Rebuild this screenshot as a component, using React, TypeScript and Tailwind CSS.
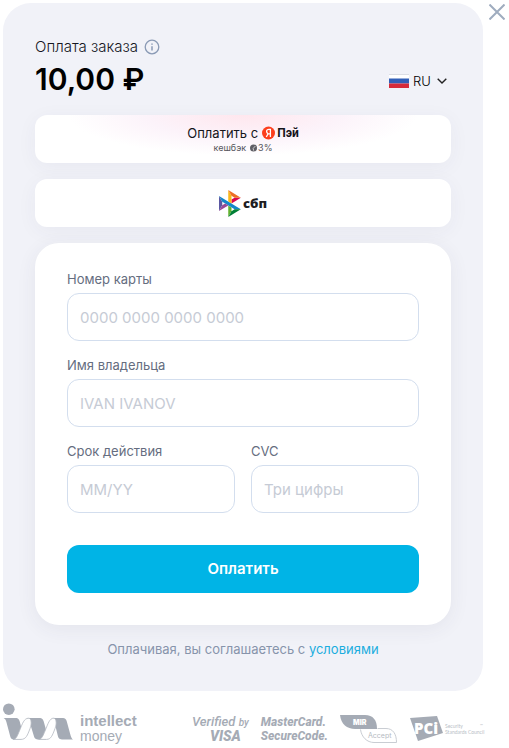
import { useState } from "react";
import type { InputHTMLAttributes } from "react";

function Field({
  id,
  label,
  ...rest
}: { id: string; label: string } & InputHTMLAttributes<HTMLInputElement>) {
  return (
    <div className="min-w-0 flex-1">
      <label htmlFor={id} className="block text-[13px] leading-6 text-[#656d80]">
        {label}
      </label>
      <input
        id={id}
        type="text"
        className="mt-0.5 h-12 w-full rounded-xl border border-[#d3deee] bg-white px-3 text-[15px] text-[#1f2433] outline-none placeholder:text-[#c6cbd5] focus:border-[#00b4e6]"
        {...rest}
      />
    </div>
  );
}

function InfoIcon() {
  return (
    <svg width="16" height="16" viewBox="0 0 16 16" fill="none" stroke="#8a9ab5">
      <circle cx="8" cy="8" r="6.8" strokeWidth="1.3" />
      <path d="M8 7.2V11.4M8 4.4V5.8" strokeWidth="1.5" />
    </svg>
  );
}

function Flag() {
  return (
    <svg width="20" height="14" viewBox="0 0 20 14">
      <path fill="#dcdee5" d="M0 0H20V5H0Z" />
      <path fill="#fff" d="M0 1H20V5H0Z" />
      <path fill="#315fb8" d="M0 4.5H20V9.5H0Z" />
      <path fill="#d52b3b" d="M0 9.5H20V14H0Z" />
    </svg>
  );
}

function YandexMark() {
  return (
    <svg width="13" height="14" viewBox="0 0 13 14">
      <circle cx="6.5" cy="7" r="6.5" fill="#fc3f1d" />
      <path
        d="M8.4 11V3.4H7C5.4 3.4 4.6 4.3 4.6 5.5C4.6 6.7 5.3 7.2 6.1 7.8L4.3 11M6.1 7.8H8.4"
        fill="none"
        stroke="#fff"
        strokeWidth="1.3"
      />
    </svg>
  );
}

function CashbackMark() {
  return (
    <svg width="7" height="8" viewBox="0 0 7 8">
      <circle cx="3.5" cy="4" r="3.5" fill="#5f5f66" />
      <path d="M3.2 4.4L5.4 2M3.2 4.4L3.6 6.6" stroke="#fff" strokeWidth="0.7" />
    </svg>
  );
}

function SbpMark() {
  return (
    <svg width="22" height="27" viewBox="0 0 98 120">
      <path fill="#5b57a2" d="M0 26.1L14.5 52.1V67.9L0 93.9Z" />
      <path fill="#d90751" d="M55.8 42.6L69.4 34.3H97.3L55.8 59.7Z" />
      <path fill="#fab718" d="M55.7 26L55.8 60.4L41.2 51.4V0Z" />
      <path fill="#ed6f26" d="M97.3 34.3H69.4L55.7 26L41.2 0Z" />
      <path fill="#63b22f" d="M55.8 94V77.3L41.2 68.5V120Z" />
      <path fill="#1487c9" d="M69.4 85.7L14.5 52.1L0 26.1L97.2 85.7Z" />
      <path fill="#017f36" d="M41.2 120L55.8 94L69.4 85.7H97.2Z" />
      <path fill="#984995" d="M0 93.9L41.4 68.5L27.5 60L14.5 67.9Z" />
    </svg>
  );
}

function ImMark() {
  return (
    <svg width="70" height="38" viewBox="0 0 70 38">
      <circle cx="5.8" cy="6.2" r="5.8" fill="#a5abb5" />
      <g fill="#a5abb5">
        <path d="M0.6 15H12.5C15.5 15 16.4 17 17 19.5L20.6 34L18 36.4H11C8.4 36.4 7.6 35 7 32.5L3.4 19C2.9 17 2.2 15.8 0.6 15Z" />
        <path d="M24 15H36C39.6 15 40.4 17 41 19.5L45 34L43 36.4H34.5C32 36.4 31.4 34.8 30.8 32.8L26 17Z" />
        <path d="M50 15H59C62.4 15 63.2 16.4 63.8 18.6L67.2 31C68 34 68.6 35.6 70 36.4H59C56 36.4 55.4 34.8 54.8 32.8L51 17Z" />
      </g>
      <g fill="#fff" stroke="#b4b9c1" strokeWidth="0.8">
        <path d="M10 36.4C13.5 36.4 14.6 32 16.4 28C19.4 20.6 21 15.2 25.6 15.2C27 15.2 27.6 16.4 27.9 17.6C28.3 19.6 28.4 22 27 25.6C24.4 32.4 23 36.4 18 36.4Z" />
        <path d="M35.6 36.4C39 36.4 40.2 32 42 28C45 20.6 46.6 15.2 50.6 15.2C52 15.2 52.6 16.4 52.9 17.6C53.3 19.6 53.4 22 52 25.6C49.4 32.4 48 36.4 43.6 36.4Z" />
      </g>
    </svg>
  );
}

function MirAccept() {
  return (
    <svg width="58" height="28" viewBox="0 0 58 28" fontFamily="Inter, sans-serif">
      <path d="M0 0H25C33 0 37 5 37 14H15C7 14 1 9 0 0Z" fill="#a5abb5" />
      <path
        d="M37.5 13.5H46C53 13.5 56.5 19 56.5 27.5H34C27 27.5 21.5 22 20.5 14.5"
        fill="none"
        stroke="#c9cdd3"
      />
      <text x="13" y="10" fontSize="7" fontWeight="900" fill="#fff">
        MIR
      </text>
      <text x="28" y="23" fontSize="7" fill="#b5bac2">
        Accept
      </text>
    </svg>
  );
}

function PciMark() {
  return (
    <svg width="75" height="26" viewBox="0 0 75 26" fontFamily="Open Sans, sans-serif">
      <path d="M0 3L27 1L33 18L8 26Z" fill="#a5abb5" />
      <text x="4" y="19" fontSize="15" fontWeight="800" fill="#fff">
        PCi
      </text>
      <g fontFamily="Lato, sans-serif" fontSize="5" fill="#b9bec6">
        <text x="35" y="13">Security</text>
        <text x="35" y="19">Standards Council</text>
        <text x="70" y="12" fontSize="4">™</text>
      </g>
    </svg>
  );
}

export default function App() {
  const [lang, setLang] = useState("RU");

  return (
    <div className="bg-white p-[3px] font-[Inter,sans-serif]">
      <div className="flex items-start gap-1.5">
        <main className="min-w-0 flex-1 rounded-[28px] bg-[#f1f2f8] px-8 pt-8 pb-[30px]">
          <header className="flex items-end justify-between">
            <div>
              <div className="flex items-center gap-1.5 text-[15px] leading-6 font-light text-[#15171f]">
                Оплата заказа
                <button type="button" aria-label="Информация о заказе">
                  <InfoIcon />
                </button>
              </div>
              <p className="text-[30px] leading-10 font-semibold text-black">10,00 ₽</p>
            </div>
            <label className="mb-2 flex items-center gap-1">
              <Flag />
              <span className="grid items-center">
                <select
                  aria-label="Язык"
                  value={lang}
                  onChange={(e) => setLang(e.target.value)}
                  className="col-start-1 row-start-1 w-[38px] appearance-none bg-transparent text-[13px] leading-5 font-light text-black outline-none"
                >
                  <option>RU</option>
                  <option>EN</option>
                </select>
                <svg
                  className="pointer-events-none col-start-1 row-start-1 mr-1 justify-self-end"
                  width="10"
                  height="6"
                  viewBox="0 0 10 6"
                  fill="none"
                >
                  <path d="M0.7 0.7L5 5L9.3 0.7" stroke="#222" strokeWidth="1.4" />
                </svg>
              </span>
            </label>
          </header>

          {/* Quick payment */}
          <div className="mt-4 space-y-4">
            <button
              type="button"
              className="flex h-12 w-full flex-col items-center justify-center rounded-xl bg-white bg-[radial-gradient(ellipse_42%_85%_at_50%_0%,#ffe7ee,#fcf3fa_55%,#ffffff)] pb-0.5 shadow-[0_4px_20px_rgba(60,60,90,0.05)]"
            >
              <span className="flex items-center gap-1 text-[13px] leading-5 text-[#15151a]">
                Оплатить с
                <span className="flex items-center gap-0.5">
                  <YandexMark />
                  <span className="font-[Roboto,sans-serif] text-xs font-bold">Пэй</span>
                </span>
              </span>
              <span className="flex items-center gap-1 text-[9px] leading-[10px] text-[#55555c]">
                кешбэк
                <span className="flex items-center gap-px">
                  <CashbackMark />
                  3%
                </span>
              </span>
            </button>
            <button
              type="button"
              className="flex h-12 w-full items-center justify-center gap-0.5 rounded-xl bg-white shadow-[0_4px_20px_rgba(60,60,90,0.05)]"
            >
              <SbpMark />
              <span className="font-[Open_Sans,sans-serif] text-[13px] leading-5 font-extrabold text-[#1d1d1f]">
                сбп
              </span>
            </button>
          </div>

          {/* Card form */}
          <form
            onSubmit={(e) => e.preventDefault()}
            className="mt-4 space-y-3 rounded-3xl bg-white px-8 pt-6 pb-8 shadow-[0_4px_20px_rgba(60,60,90,0.07)]"
          >
            <Field id="number" label="Номер карты" placeholder="0000 0000 0000 0000" inputMode="numeric" />
            <Field id="holder" label="Имя владельца" placeholder="IVAN IVANOV" />
            <div className="flex gap-4">
              <Field id="expiry" label="Срок действия" placeholder="MM/YY" />
              <Field id="cvc" label="CVC" placeholder="Три цифры" inputMode="numeric" />
            </div>
            <button
              type="submit"
              className="mt-5 h-12 w-full rounded-xl bg-[#00b4e6] text-[15px] font-semibold text-white"
            >
              Оплатить
            </button>
          </form>

          <p className="mt-3 text-center text-[13px] leading-6 text-[#8794ab]">
            Оплачивая, вы соглашаетесь с{" "}
            <a href="#terms" className="text-[#1badde]">
              условиями
            </a>
          </p>
        </main>
        <button type="button" aria-label="Закрыть" className="mt-px mr-px">
          <svg width="16" height="16" viewBox="0 0 16 16" fill="none">
            <path d="M0.5 0.5L15.5 15.5M15.5 0.5L0.5 15.5" stroke="#9facbf" strokeWidth="2" />
          </svg>
        </button>
      </div>

      <footer className="mt-3 flex items-start justify-between pr-[21px] text-[#a5abb5]">
        <div className="flex items-start gap-[7px]">
          <ImMark />
          <div className="pt-2.5 font-[Liberation_Sans,sans-serif]">
            <p className="text-[15px] leading-4 font-bold">intellect</p>
            <p className="text-sm leading-[14px]">money</p>
          </div>
        </div>
        <div className="flex items-start gap-3 pt-3">
          <div className="font-[Roboto,sans-serif] italic">
            <p className="text-[13px] leading-[14px] font-medium">
              Verified <span className="text-[10px]">by</span>
            </p>
            <p className="pr-2 text-right text-sm leading-3 font-black">VISA</p>
          </div>
          <div className="font-[Roboto,sans-serif] text-xs leading-[14px] font-extrabold italic">
            <p>MasterCard.</p>
            <p>SecureCode.</p>
          </div>
          <MirAccept />
          <PciMark />
        </div>
      </footer>
    </div>
  );
}
